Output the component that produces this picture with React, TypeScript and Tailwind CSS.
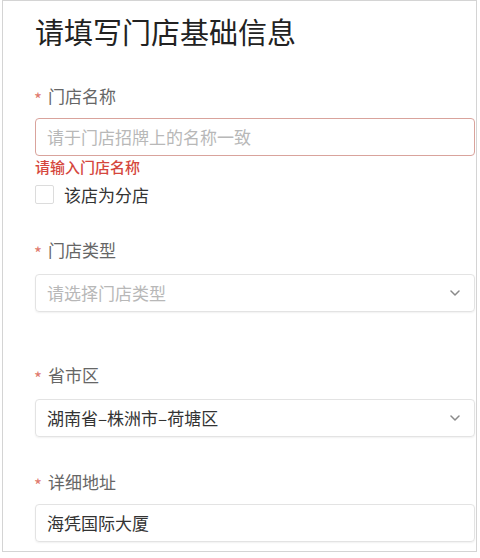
import React from "react";

const font = { fontFamily: '"Noto Sans CJK SC", "Noto Sans", sans-serif' };

function Label({ text, mt }: { text: string; mt: string }) {
  return (
    <div className={`flex items-center h-[24px] leading-[24px] text-[17px] text-[#666] ${mt}`}>
      <span className="text-[#e07a6e] text-[17px] w-[14px] ml-[-1px] translate-y-[3px]">*</span>
      <span>{text}</span>
    </div>
  );
}

function Chevron() {
  return (
    <svg width="10" height="6" viewBox="0 0 10 6" className="absolute right-[14px] top-1/2 -translate-y-1/2">
      <polyline points="1,1 5,5 9,1" fill="none" stroke="#8a8a8a" strokeWidth="1.5" strokeLinecap="round" strokeLinejoin="round" />
    </svg>
  );
}

export default function App() {
  return (
    <div className="w-[480px] h-[558px] bg-white pl-[2px]" style={font}>
      <div className="w-[475px] h-[552px] border-l border-r border-t border-b border-[#d4d4d4] pl-[32px]">
        <div className="mt-[12px] h-[36px] leading-[36px] text-[29px] text-[#222]">请填写门店基础信息</div>

        <Label text="门店名称" mt="mt-[35px]" />
        <div className="mt-[10px] w-[440px] h-[38px] border border-[#d9a39c] rounded-[4px] flex items-center pl-[11px] text-[17px] text-[#b8b8b8]">
          请于门店招牌上的名称一致
        </div>
        <div className="mt-[1px] h-[20px] leading-[20px] text-[15px] text-[#d5473d] font-medium">请输入门店名称</div>
        <div className="mt-[8px] flex items-center h-[19px]">
          <div className="w-[19px] h-[19px] border border-[#dcdcdc] rounded-[2px] bg-white" />
          <span className="ml-[10px] text-[17px] text-[#333] leading-[19px]">该店为分店</span>
        </div>

        <Label text="门店类型" mt="mt-[34px]" />
        <div className="relative mt-[12px] w-[440px] h-[38px] border border-[#e3e3e3] rounded-[4px] shadow-[0_1px_2px_rgba(0,0,0,0.06)] flex items-center pl-[11px] text-[17px] text-[#b8b8b8]">
          请选择门店类型
          <Chevron />
        </div>

        <Label text="省市区" mt="mt-[51px]" />
        <div className="relative mt-[12px] w-[440px] h-[38px] border border-[#e3e3e3] rounded-[4px] shadow-[0_1px_2px_rgba(0,0,0,0.06)] flex items-center pl-[11px] text-[17px] text-[#333]">
          湖南省–株洲市–荷塘区
          <Chevron />
        </div>

        <Label text="详细地址" mt="mt-[33px]" />
        <div className="mt-[10px] w-[440px] h-[38px] border border-[#e3e3e3] rounded-[4px] shadow-[0_1px_2px_rgba(0,0,0,0.06)] flex items-center pl-[11px] text-[17px] text-[#333]">
          海凭国际大厦
        </div>
      </div>
    </div>
  );
}
